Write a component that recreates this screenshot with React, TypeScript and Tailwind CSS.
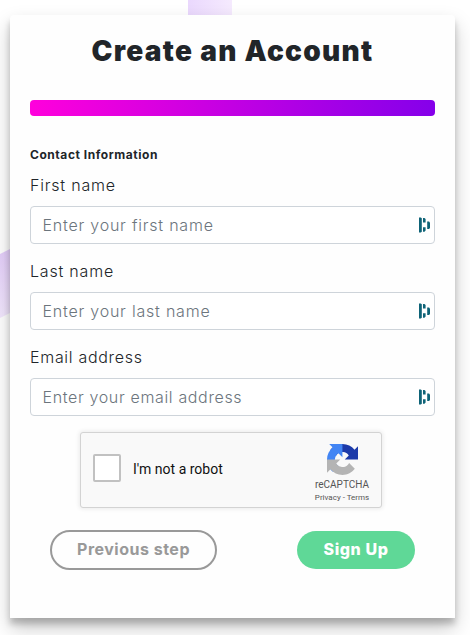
type FieldProps = { id: string; label: string; placeholder: string; labelSpacing: string; inputSpacing: string };

function ManagerIcon() {
  return (
    <svg className="absolute top-[11px] right-1 h-4 w-3" viewBox="0 0 12 16" fill="#0e6377" aria-hidden="true">
      <path d="M0 .5H1.800L2.800 1.200V14.800L1.800 15.500H0z" />
      <path d="M4 1H5.500L6.600 2V5.500H4zM4 10.300H6.600V13.500L5.500 14.700H4z" />
      <path d="M8.200 4.500H10L11 5.500V11L10 12H8.200z" />
    </svg>
  );
}

function Field({ id, label, placeholder, labelSpacing, inputSpacing }: FieldProps) {
  return (
    <div className="mb-4">
      <label htmlFor={id} className={`mb-2 block h-6 text-[16px] leading-[22px] font-light text-[#212529] ${labelSpacing}`}>
        {label}
      </label>
      <div className="relative h-[38px]">
        <input
          id={id}
          placeholder={placeholder}
          className={`block h-[38px] w-full rounded border border-[#ced4da] bg-white px-[11.500px] text-[16px] font-light text-[#495057] placeholder:text-[#6c757d] ${inputSpacing}`}
        />
        <ManagerIcon />
      </div>
    </div>
  );
}

function RecaptchaLogo() {
  return (
    <svg className="h-[31px] w-[31px]" viewBox="0 0 64 64" aria-hidden="true">
      <path
        fill="#1c3aa9"
        d="M64 31.955l-.016-1.370V4.687l-7.160 7.160C50.964 4.674 42.033.093 32.033.093c-10.406 0-19.650 4.960-25.490 12.642l11.736 11.860a15.550 15.550 0 0 1 4.754-5.334c2.050-1.600 4.952-2.906 8.968-2.906.485 0 .860.057 1.135.163 4.976.393 9.288 3.140 11.828 7.124l-8.307 8.307L64 31.953"
      />
      <path
        fill="#4285f4"
        d="M31.862.094l-1.370.016H4.594l7.160 7.160C4.580 13.147 0 22.080 0 32.070c0 10.406 4.960 19.650 12.642 25.490L24.500 45.820a15.550 15.550 0 0 1-5.334-4.754c-1.600-2.050-2.906-4.952-2.906-8.968 0-.485.057-.860.163-1.135.393-4.976 3.140-9.288 7.124-11.828l8.307 8.307L31.860.094"
      />
      <path
        fill="#b4b4b4"
        d="M.001 32.037l.016 1.370v25.900l7.160-7.160c5.860 7.174 14.792 11.755 24.780 11.755 10.406 0 19.650-4.960 25.490-12.642l-11.736-11.860a15.550 15.550 0 0 1-4.754 5.334c-2.050 1.600-4.952 2.906-8.968 2.906-.485 0-.860-.057-1.135-.163-4.976-.393-9.288-3.140-11.828-7.124l8.307-8.307L.001 32.037"
      />
    </svg>
  );
}

export default function App() {
  return (
    <div className="relative h-[635px] w-[470px] overflow-hidden bg-white px-[10px] pt-[15px] font-['Inter',sans-serif]">
      <div className="absolute top-0 left-[188px] h-10 w-11 bg-linear-to-r from-[#ead8fd] to-[#f5eafe]" />
      <svg className="absolute top-[240px] left-0 h-24 w-10" viewBox="0 0 40 96" aria-hidden="true">
        <defs>
          <linearGradient id="ribbon" x1="0" y1="0" x2="0" y2="1">
            <stop offset="0" stopColor="#e1c8fa" />
            <stop offset="1" stopColor="#f3e8fe" />
          </linearGradient>
        </defs>
        <path d="M0 14 40-6v64L0 78z" fill="url(#ribbon)" />
      </svg>
      <main className="relative h-[603px] w-[445px] rounded-t bg-[#fefefe] px-5 pt-5 shadow-[0_10px_20px_rgba(0,0,0,0.21),0_6px_6px_rgba(0,0,0,0.2)]">
        <h1 className="h-[34px] text-center text-[28px] leading-[32px] font-black tracking-[1.3px] whitespace-nowrap text-[#212529]">
          Create an Account
        </h1>
        <div className="mt-[31px] h-4 rounded bg-linear-to-r/srgb from-[#ff00dc] to-[#8500ea]" />
        <h2 className="mt-[30px] h-[18px] text-[12px] leading-[18px] font-bold tracking-[0.55px] text-[#212529]">
          Contact Information
        </h2>
        <form className="mt-[10px]">
          <Field id="first" label="First name" placeholder="Enter your first name" labelSpacing="tracking-[0.8px]" inputSpacing="tracking-[0.78px]" />
          <Field id="last" label="Last name" placeholder="Enter your last name" labelSpacing="tracking-[0.8px]" inputSpacing="tracking-[0.78px]" />
          <Field id="email" label="Email address" placeholder="Enter your email address" labelSpacing="tracking-[0.7px]" inputSpacing="tracking-[0.65px]" />
          <div className="ml-[50px] flex h-[76px] w-[302px] items-center rounded-[3px] border border-[#d3d3d3] bg-[#f9f9f9] pr-3 pl-3 font-['Roboto',sans-serif] shadow-[0_0_4px_1px_rgba(0,0,0,0.08)]">
            <div className="-mt-1 h-7 w-7 rounded-[2px] border-2 border-[#c1c1c1] bg-white" />
            <span className="-mt-0.5 ml-3 text-[14px] leading-[17px] text-[#111111]">I'm not a robot</span>
            <div className="ml-auto flex w-[54px] flex-col items-center pt-[7px] text-[#555555]">
              <RecaptchaLogo />
              <span className="mt-[5px] text-[10px] leading-[10px] whitespace-nowrap">reCAPTCHA</span>
              <span className="mt-[3px] text-[8px] leading-[10px] whitespace-nowrap">Privacy - Terms</span>
            </div>
          </div>
          <div className="mt-[22px] flex items-center justify-between px-5">
            <button type="button" className="h-10 w-[167px] rounded-full border-2 border-[#999999] pb-0.5 text-[16px] font-bold tracking-[0.5px] text-[#999999]">
              Previous step
            </button>
            <button type="button" className="h-[38px] w-[118px] rounded-full bg-[#5fd897] pb-0.5 text-[16px] font-extrabold tracking-[0.6px] text-white">
              Sign Up
            </button>
          </div>
        </form>
      </main>
    </div>
  );
}
